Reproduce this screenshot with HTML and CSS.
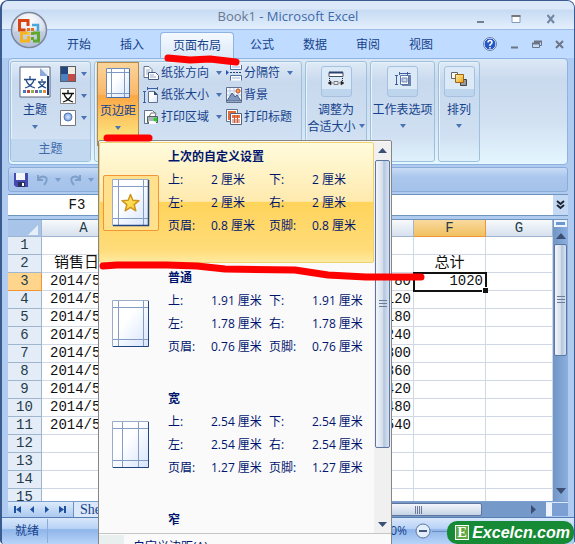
FILE: index.html
```html
<!DOCTYPE html>
<html lang="zh-CN">
<head>
<meta charset="utf-8">
<title>Book1 - Microsoft Excel</title>
<link rel="stylesheet" href="styles.css">
</head>
<body>
<svg class="defs" aria-hidden="true">
  <defs>
    <linearGradient id="page" x1="0" y1="0" x2="1" y2="1"><stop offset=".4" stop-color="#fff"/><stop offset="1" stop-color="#d6e4ff"/></linearGradient>
    <linearGradient id="gold" x1="0" y1="0" x2="1" y2="1"><stop offset="0" stop-color="#fff0a8"/><stop offset="1" stop-color="#eda51c"/></linearGradient>
    <linearGradient id="star" x1="0" y1="0" x2="1" y2="1"><stop offset="0" stop-color="#fff27a"/><stop offset="1" stop-color="#f9c62c"/></linearGradient>
    <radialGradient id="orb" cx=".5" cy=".25" r=".8"><stop offset="0" stop-color="#fff"/><stop offset=".5" stop-color="#dfe4ee"/><stop offset="1" stop-color="#9eb0cf"/></radialGradient>
    <radialGradient id="ball"><stop offset="0" stop-color="#dbe9ff"/><stop offset="1" stop-color="#7da0dc"/></radialGradient>
    <symbol id="arrow" viewBox="0 0 6 4"><path d="M0 0h6L3 4z" fill="#4a74b4"/></symbol>
  </defs>
</svg>
<div class="window">
  <header class="titlebar">
    <h1><span>Book1</span> - Microsoft Excel</h1>
    <div class="controls">
      <button aria-label="最小化"><svg width="10" height="10" viewBox="0 0 10 10"><path d="M1 8h7" stroke="#777f8c" stroke-width="2"/></svg></button>
      <button aria-label="最大化"><svg width="10" height="10" viewBox="0 0 10 10"><path d="M1 1.500h8v7H1z" fill="#fff" stroke="#7f9cc6"/><path d="M.5 2h9" stroke="#777" stroke-width="2"/></svg></button>
      <button aria-label="关闭"><svg width="10" height="10" viewBox="0 0 10 10"><path d="M1.500 1l6.500 8M8 1L1.500 9" stroke="#7387a5" stroke-width="2"/></svg></button>
    </div>
  </header>
  <button class="office" aria-label="Office 按钮">
    <svg width="38" height="38" viewBox="0 0 38 38">
      <circle cx="19" cy="19" r="17.500" fill="url(#orb)" stroke="#7d879b" stroke-width="1.500"/>
      <path d="M4 21q15-6 30 0a15 15 0 0 1-30 0z" fill="#b9c3d8" opacity=".6"/>
      <g fill="none" stroke-width="3"><path d="M18 15V9.500h-8.500v9.500h6" stroke="#d8430f"/><path d="M18 22h-6.500v8h7v-5" stroke="#f4b41c"/><path d="M23 30h5.500v-8H23" stroke="#5fa829"/><path d="M22 14h6v6" stroke="#48a8dc" stroke-width="2.500"/></g>
      <path d="M17 17h3v3h-3zM21 17h3v3h-3z" fill="#e5731b"/><path d="M17 21h3v3h-3z" fill="#f4c53c"/><path d="M21 21h3v3h-3zM21 26h3v3h-3z" fill="#6aa52e"/>
    </svg>
  </button>
  <nav class="tabs">
    <button>开始</button><button>插入</button><button class="active">页面布局</button><button>公式</button><button>数据</button><button>审阅</button><button>视图</button>
    <div class="doc-controls">
      <button aria-label="帮助"><svg width="14" height="14" viewBox="0 0 14 14"><circle cx="7" cy="7" r="6" fill="#2458c8" stroke="#fff"/><circle cx="7" cy="7" r="6.500" fill="none" stroke="#6a7da8"/><path d="M5 5.500Q5 3.500 7 3.500t2 2Q9 6.500 7 7.800V9M7 10v1.500" fill="none" stroke="#fff" stroke-width="1.500"/></svg></button>
      <button aria-label="最小化工作簿"><svg width="9" height="9" viewBox="0 0 9 9"><path d="M1 7.500h7" stroke="#6d7584" stroke-width="2"/></svg></button>
      <button aria-label="还原工作簿"><svg width="10" height="9" viewBox="0 0 10 9"><path d="M2.500 3V1.500h7v4H8M.5 3.500h7v4h-7z" fill="none" stroke="#6d7584"/><path d="M0 3.500h8M2 1.500h8" stroke="#6d7584" stroke-width="2"/></svg></button>
      <button aria-label="关闭工作簿"><svg width="9" height="9" viewBox="0 0 9 9"><path d="M1 1l7 7M8 1L1 8" stroke="#6d7584" stroke-width="2"/></svg></button>
    </div>
  </nav>
  <section class="ribbon">
    <div class="group theme">
      <div class="body">
        <button class="big">
          <svg width="32" height="32" viewBox="0 0 32 32"><path d="M1 1h30v30H1z" fill="#fff" stroke="#59657c"/><path d="M22 3h7v7z" fill="#e7effa"/><path d="M21 2v8h8z" fill="#8ea9d8"/><path d="M29 10v19" stroke="#183a73" stroke-width="2"/><g fill="none" stroke="#254d87" stroke-width="1.300"><path d="M11 10v3M5 13.500h12M7 14q2 6 9 8M15 14q-2 6-9 8"/><path d="M23 13v2M19 16h8M20 16q2 4 7 6M26 16q-2 4-7 6"/></g><path d="M4 24h3v3H4z" fill="#4678bd"/><path d="M8 24h3v3H8z" fill="#c0453f"/><path d="M12 24h3v3h-3z" fill="#92b14b"/><path d="M16 24h3v3h-3z" fill="#7a5a9e"/><path d="M20 24h3v3h-3z" fill="#3ea7c3"/><path d="M24 24h3v3h-3z" fill="#f08b35"/></svg>
          <span>主题</span><svg class="arrow"><use href="#arrow"/></svg>
        </button>
        <div class="stack">
          <button aria-label="颜色"><svg width="16" height="16" viewBox="0 0 16 16"><path d="M0 0h16v16H0z" fill="#5b6067"/><path d="M1 1h7v7H1z" fill="#21477e"/><path d="M8 1h7v7H8z" fill="#f0ede0"/><path d="M1 8h7v7H1z" fill="#4b80c3"/><path d="M8 8h7v7H8z" fill="#c34b45"/></svg><svg class="arrow"><use href="#arrow"/></svg></button>
          <button aria-label="字体"><svg width="16" height="16" viewBox="0 0 16 16"><path d="M.5.5h15v15H.5z" fill="#fff" stroke="#888"/><path d="M8 2v3M2 5.500h12M4 6q2 6 9 8M12 6q-2 6-9 8" fill="none" stroke="#111" stroke-width="1.300"/></svg><svg class="arrow"><use href="#arrow"/></svg></button>
          <button aria-label="效果"><svg width="16" height="16" viewBox="0 0 16 16"><path d="M.5.5h15v15H.5z" fill="#fff" stroke="#777"/><circle cx="8" cy="7" r="4" fill="url(#ball)" stroke="#527ac0"/></svg><svg class="arrow"><use href="#arrow"/></svg></button>
        </div>
      </div>
      <h2>主题</h2>
    </div>
    <div class="group setup">
      <div class="body">
        <button class="big margins" aria-expanded="true">
          <svg width="24" height="32" viewBox="0 0 24 32"><path d="M.5 1.500h23v29H.5z" fill="url(#page)" stroke="#6e8bb8"/><path d="M5.500 1v29M18.500 1v29M0 5.500h23M0 26.500h23" stroke="#7d99c2"/><path d="M23.500 2v28.500H1" fill="none" stroke="#466ba5"/></svg>
          <span>页边距</span><svg class="arrow"><use href="#arrow"/></svg>
        </button>
        <div class="stack">
          <button><svg width="16" height="16" viewBox="0 0 16 16"><path d="M1 1.500h5l3 3v8H1z" fill="#fff" stroke="#63728e"/><path d="M3 5h4M3 7h4M3 9h3" stroke="#93a9cf"/><path d="M5.500 7.500h7l3 3v4h-10z" fill="#fff" stroke="#485a7e"/><path d="M7 10h4M7 12h6" stroke="#93a9cf"/></svg><span>纸张方向</span><svg class="arrow"><use href="#arrow"/></svg></button>
          <button><svg width="16" height="16" viewBox="0 0 16 16"><path d="M5 1.500h9M4.500 0v3M14.500 0v3M1.500 5v10M0 4.500h3M0 15.500h3" stroke="#3d5f9f"/><path d="M5.500 4.500h6l3 3v8h-9z" fill="url(#page)" stroke="#63728e"/><path d="M11 4v4h4z" fill="#344d7c"/></svg><span>纸张大小</span><svg class="arrow"><use href="#arrow"/></svg></button>
          <button><svg width="16" height="16" viewBox="0 0 16 16"><path d="M1.500 1.500h8l3 3v10h-11z" fill="url(#page)" stroke="#63728e"/><path d="M6 8l2-4h5l-1 4z" fill="#fff" stroke="#777"/><path d="M4.500 7.500h10v6h-10z" fill="#a9b4b9" stroke="#545e66"/><path d="M6 12h7v3H6z" fill="#fff"/><circle cx="12.500" cy="10.500" r="2" fill="#29ce29"/></svg><span>打印区域</span><svg class="arrow"><use href="#arrow"/></svg></button>
        </div>
        <div class="stack">
          <button><svg width="16" height="16" viewBox="0 0 16 16"><path d="M4.500 0v4.500h11V0M4.500 15.500v-5h11v5" fill="#fff" stroke="#52709f"/><path d="M6 2h8M6 13h8" stroke="#9cb3da"/><path d="M4 7.500h12" stroke="#29436f" stroke-dasharray="2 1"/><path d="M0 5l3 2.500L0 10z" fill="#2554b3"/></svg><span>分隔符</span><svg class="arrow"><use href="#arrow"/></svg></button>
          <button><svg width="16" height="16" viewBox="0 0 16 16"><path d="M.5.5h15v15H.5z" fill="#f6f9ff" stroke="#63728e"/><path d="M4 1v14M8 1v14M12 1v14M1 4h14M1 8h14" stroke="#bccbe4"/><path d="M1 14l5-8 3 4 2-2 4 6z" fill="#8299bf" stroke="#4b618a"/><circle cx="12" cy="4" r="2" fill="#f7a04b" stroke="#c4502c"/></svg><span>背景</span></button>
          <button><svg width="16" height="16" viewBox="0 0 16 16"><path d="M.5.5h11v12H.5z" fill="#fff" stroke="#63728e"/><path d="M2 3h8M3 2v9" stroke="#e16b37" stroke-width="2"/><path d="M4.500 4.500h11v11h-11z" fill="#fff" stroke="#505f7b"/><path d="M6 6h8v3H6z" fill="#ef713f"/><path d="M6 11h8M6 13h8M8.500 6v8M11.500 6v8" stroke="#c75d3c"/></svg><span>打印标题</span></button>
        </div>
      </div>
    </div>
    <div class="group collapsed scale"><button class="big"><span class="tile"><svg width="16" height="16" viewBox="0 0 16 16"><path d="M1 1.500h14v4H1z" fill="#fff" stroke="#44526e"/><path d="M1 1.500h14" stroke="#29436f" stroke-width="2"/><path d="M1.500 7v4M14.500 7v4" stroke="#222" stroke-dasharray="1 1"/><path d="M6 10.500h4v3H6z" fill="#eee" stroke="#777"/><path d="M0 12l3-2v4zM16 12l-3-2v4zM3 12h2M11 12h2" fill="#222" stroke="#222" stroke-width=".5"/></svg></span><span>调整为</span><span>合适大小 <svg class="arrow"><use href="#arrow"/></svg></span></button></div>
    <div class="group collapsed options"><button class="big"><span class="tile"><svg width="16" height="16" viewBox="0 0 16 16"><path d="M4.500 2.500h11M4.500 1v3M12.500 1v3M1.500 4v9M0 4.500h3M0 13.500h3" stroke="#3d5f9f"/><path d="M7 4h9v11H7z" fill="#6d83ab"/><path d="M5.500 4.500h8v9h-8z" fill="#fff" stroke="#5975a8"/><path d="M7 7h5v4H7z" fill="#c8d3e8" stroke="#7389b0"/></svg></span><span>工作表选项</span><svg class="arrow"><use href="#arrow"/></svg></button></div>
    <div class="group collapsed arrange"><button class="big"><span class="tile"><svg width="16" height="16" viewBox="0 0 16 16"><path d="M.5 1.500h6v6h-6z" fill="#f9fafc" stroke="#666"/><path d="M9.500 8.500h6v6h-6z" fill="#999" stroke="#444"/><path d="M4.500 3.500h8v8h-8z" fill="url(#gold)" stroke="#9e6413"/></svg></span><span>排列</span><svg class="arrow"><use href="#arrow"/></svg></button></div>
  </section>
  <div class="quick">
    <button aria-label="保存"><svg width="14" height="14" viewBox="0 0 14 14"><path d="M0 0h14v14H2l-2-2z" fill="#4649b0"/><path d="M2 0h9v7H2z" fill="#f3f6fd"/><path d="M4 9h7v5H4z" fill="#27305a"/><path d="M8 10h2v3H8z" fill="#fff"/></svg></button>
    <button aria-label="撤消"><svg width="13" height="13" viewBox="0 0 13 13"><path d="M2 2v5h5M2 7q3-5 7-3t-1 8" fill="none" stroke="#7f9fcb" stroke-width="2"/></svg></button>
    <svg class="arrow pale"><use href="#arrow"/></svg>
    <button aria-label="恢复"><svg width="13" height="13" viewBox="0 0 13 13"><path d="M11 2v5H6M11 7Q8 2 4 4t1 8" fill="none" stroke="#7f9fcb" stroke-width="2"/></svg></button>
    <svg class="arrow pale"><use href="#arrow"/></svg>
  </div>
  <div class="formula">
    <input class="name" aria-label="名称框" value="F3"><input class="entry" aria-label="编辑栏">
    <button aria-label="展开编辑栏"><svg width="9" height="10" viewBox="0 0 9 10"><path d="M1 1l3.500 3L8 1M1 5l3.500 3L8 5" fill="none" stroke="#1b2430" stroke-width="2"/></svg></button>
  </div>
  <main class="work">
    <div class="grid">
      <table>
        <colgroup><col class="c-head"><col class="c-a"><col class="c"><col class="c"><col class="c"><col class="c"><col class="c"><col></colgroup>
        <thead><tr><th class="corner"><svg width="10" height="10" viewBox="0 0 10 10"><path d="M10 0v10H0z" fill="#e6eefa"/></svg></th><th>A</th><th>B</th><th>C</th><th>D</th><th>E</th><th class="on">F</th><th>G</th></tr></thead>
        <tbody>
          <tr><th>1</th><td></td><td></td><td></td><td></td><td></td><td></td><td></td></tr>
          <tr class="names"><th>2</th><td>销售日期</td><td></td><td></td><td></td><td></td><td>总计</td><td></td></tr>
          <tr><th class="on">3</th><td>2014/5/1</td><td></td><td></td><td></td><td>80</td><td class="selected">1020</td><td></td></tr>
          <tr><th>4</th><td>2014/5/2</td><td></td><td></td><td></td><td>120</td><td></td><td></td></tr>
          <tr><th>5</th><td>2014/5/3</td><td></td><td></td><td></td><td>180</td><td></td><td></td></tr>
          <tr><th>6</th><td>2014/5/4</td><td></td><td></td><td></td><td>240</td><td></td><td></td></tr>
          <tr><th>7</th><td>2014/5/5</td><td></td><td></td><td></td><td>300</td><td></td><td></td></tr>
          <tr><th>8</th><td>2014/5/6</td><td></td><td></td><td></td><td>360</td><td></td><td></td></tr>
          <tr><th>9</th><td>2014/5/7</td><td></td><td></td><td></td><td>420</td><td></td><td></td></tr>
          <tr><th>10</th><td>2014/5/8</td><td></td><td></td><td></td><td>480</td><td></td><td></td></tr>
          <tr><th>11</th><td>2014/5/9</td><td></td><td></td><td></td><td>540</td><td></td><td></td></tr>
          <tr><th>12</th><td></td><td></td><td></td><td></td><td></td><td></td><td></td></tr>
          <tr><th>13</th><td></td><td></td><td></td><td></td><td></td><td></td><td></td></tr>
          <tr><th>14</th><td></td><td></td><td></td><td></td><td></td><td></td><td></td></tr>
          <tr><th>15</th><td></td><td></td><td></td><td></td><td></td><td></td><td></td></tr>
        </tbody>
      </table>
    </div>
    <div class="vscroll">
      <div class="split"></div>
      <svg width="10" height="6" viewBox="0 0 10 6"><path d="M5 0l5 6H0z" fill="#3b4e73"/></svg>
      <div class="thumb"><i></i></div>
      <svg class="down" width="10" height="6" viewBox="0 0 10 6"><path d="M0 0h10L5 6z" fill="#3b4e73"/></svg>
    </div>
  </main>
  <div class="sheets">
    <button aria-label="第一张"><svg width="7" height="7" viewBox="0 0 7 7"><path d="M0 0h2v7H0zM7 0v7L2 3.500z" fill="#1d50a0"/></svg></button>
    <button aria-label="上一张"><svg width="7" height="7" viewBox="0 0 7 7"><path d="M5 0v7L1 3.500z" fill="#1d50a0"/></svg></button>
    <button aria-label="下一张"><svg width="7" height="7" viewBox="0 0 7 7"><path d="M1 0v7l4-3.500z" fill="#1d50a0"/></svg></button>
    <button aria-label="最后一张"><svg width="7" height="7" viewBox="0 0 7 7"><path d="M5 0h2v7H5zM0 0v7l5-3.500z" fill="#1d50a0"/></svg></button>
    <button class="sheet-tab">Sheet1</button>
    <div class="hscroll"><div class="thumb"><i></i></div><svg width="5" height="9" viewBox="0 0 5 9"><path d="M0 0v9l5-4.500z" fill="#3b4e73"/></svg></div>
    <div class="hsplit"></div>
  </div>
  <footer class="status">
    <span class="ready">就绪</span>
    <span class="zoom">100%</span>
    <button aria-label="缩小"><svg width="16" height="16" viewBox="0 0 16 16"><circle cx="8" cy="8" r="7" fill="#e3eefc" stroke="#5c769f"/><path d="M4 8h8" stroke="#44577a" stroke-width="2"/></svg></button>
    <input type="range" aria-label="显示比例" value="50">
  </footer>
  <div class="menu">
    <div class="viewport">
      <div class="list">
        <button class="item last">
          <span class="thumbnail"><svg width="38" height="48" viewBox="0 0 38 48"><path d="M.5.5h36v46H.5z" fill="url(#page)" stroke="#9aadc8"/><path d="M6.500 1v45M31.500 1v45M1 7.500h35M1 39.500h35" stroke="#859dc0"/><path d="M36.500 1v45.500H1" fill="none" stroke="#23457f" stroke-width="1.500"/><path d="M18.500 15.500l2.300 5.800 6.200.4-4.800 4 1.600 6.100-5.300-3.400-5.300 3.400 1.600-6.100-4.800-4 6.200-.4z" fill="url(#star)" stroke="#cf951c" stroke-width="1.500" stroke-linejoin="round"/></svg></span>
          <span class="values"><b>上次的自定义设置</b><span>上:</span><span>2 厘米</span><span>下:</span><span>2 厘米</span><span>左:</span><span>2 厘米</span><span>右:</span><span>2 厘米</span><span>页眉:</span><span>0.8 厘米</span><span>页脚:</span><span>0.8 厘米</span></span>
        </button>
        <button class="item">
          <span class="thumbnail"><svg width="38" height="48" viewBox="0 0 38 48"><path d="M.5.5h36v46H.5z" fill="url(#page)" stroke="#9aadc8"/><path d="M6.500 1v45M31.500 1v45M1 7.500h35M1 39.500h35" stroke="#859dc0"/><path d="M36.500 1v45.500H1" fill="none" stroke="#23457f"/></svg></span>
          <span class="values"><b>普通</b><span>上:</span><span>1.91 厘米</span><span>下:</span><span>1.91 厘米</span><span>左:</span><span>1.78 厘米</span><span>右:</span><span>1.78 厘米</span><span>页眉:</span><span>0.76 厘米</span><span>页脚:</span><span>0.76 厘米</span></span>
        </button>
        <button class="item">
          <span class="thumbnail"><svg width="38" height="48" viewBox="0 0 38 48"><path d="M.5.5h36v46H.5z" fill="url(#page)" stroke="#9aadc8"/><path d="M10.500 1v45M26.500 1v45M1 7.500h35M1 39.500h35" stroke="#859dc0"/><path d="M36.500 1v45.500H1" fill="none" stroke="#23457f"/></svg></span>
          <span class="values"><b>宽</b><span>上:</span><span>2.54 厘米</span><span>下:</span><span>2.54 厘米</span><span>左:</span><span>2.54 厘米</span><span>右:</span><span>2.54 厘米</span><span>页眉:</span><span>1.27 厘米</span><span>页脚:</span><span>1.27 厘米</span></span>
        </button>
        <button class="item"><span class="thumbnail"></span><span class="values"><b>窄</b></span></button>
      </div>
      <div class="menu-scroll">
        <svg width="9" height="5" viewBox="0 0 9 5"><path d="M4.500 0L9 5H0z" fill="#3b4e73"/></svg>
        <div class="thumb"><i></i></div>
        <svg class="down" width="9" height="5" viewBox="0 0 9 5"><path d="M0 0h9L4.500 5z" fill="#3b4e73"/></svg>
      </div>
    </div>
    <button class="custom">自定义边距(A)...</button>
  </div>
  <div class="brand"><span>E</span>Excelcn.com</div>
  <svg class="marks" width="430" height="290" viewBox="0 0 430 290" aria-hidden="true"><g fill="none" stroke="#f00" stroke-width="7" stroke-linecap="round" stroke-linejoin="round"><path d="M168 58l22 2 20-1 26 3"/><path d="M107 138h42"/><path d="M103 266l14-1h50l30 1 28 3 70 1 33 5 38 2h55"/></g></svg>
</div>
</body>
</html>
```
FILE: styles.css
```css
* { box-sizing: border-box; }
body { margin: 0; font: 12px/16px "Open Sans", "Noto Sans CJK SC", sans-serif; color: #15428b; background: #fff; }
button, input { font: inherit; color: inherit; margin: 0; padding: 0; border: 0; background: none; }
svg { display: block; flex: none; }
h1, h2 { margin: 0; font-size: 12px; font-weight: 400; }
.defs { position: absolute; width: 0; height: 0; }
.window { position: relative; display: flex; flex-direction: column; height: 100vh; overflow: hidden; border: solid #3b5a90; border-width: 1px 1px 0 2px; border-radius: 8px 8px 4px 4px; background: #b0cbf0; }
.arrow { width: 6px; height: 4px; }

.titlebar { position: relative; flex: none; height: 29px; border-bottom: 1px solid #9bbce8; background: linear-gradient(#dae8fa 0 8px, #c7dbf3 9px, #e3effd); }
.titlebar h1 { padding-top: 7px; text-align: center; font-size: 13px; color: #3e6aaa; }
.titlebar h1 span { color: #697890; }
.controls { position: absolute; right: 18px; top: 13px; display: flex; gap: 25px; }

.office { position: absolute; left: 8px; top: 10px; z-index: 2; }

.tabs { flex: none; display: flex; align-items: flex-end; gap: 3px; height: 28px; padding: 0 10px 0 52px; background: #bfdbff; }
.tabs > button { width: 50px; height: 26px; }
.tabs .active { width: 74px; border: 1px solid #8db2e3; border-bottom: 0; border-radius: 4px 4px 0 0; background: linear-gradient(#f4f9ff, #dce9f8); }
.doc-controls { display: flex; align-items: center; gap: 13px; height: 28px; margin-left: auto; }

.ribbon { flex: none; display: flex; gap: 3px; height: 107px; margin: 0 6px; padding: 2px 1px; border: 1px solid #8db2e3; border-radius: 4px; background: linear-gradient(#dce8f5, #c9daee 20%, #d2e1f2 60%, #e4f6ff); }
.group { display: flex; flex-direction: column; overflow: hidden; border: 1px solid #9dc1dc; border-radius: 3px; box-shadow: inset 1px 1px 0 #e8f2fb; background: linear-gradient(#dfeaf6, #c8d9ee 20%, #d0e0f2 75%, #dff1fc); }
.group h2 { height: 22px; line-height: 20px; text-align: center; color: #3e6aaa; background: #c2d8f1; }
.body { flex: 1; display: flex; min-height: 0; }
.theme { width: 81px; }
.setup { width: 208px; }
.scale { width: 62px; }
.options { width: 65px; }
.arrange { width: 42px; }
.big { display: flex; flex-direction: column; align-items: center; gap: 3px; padding-top: 4px; line-height: 17px; white-space: nowrap; }
.big .arrow { margin-top: 4px; }
.big span .arrow { display: inline-block; margin: 0 0 3px; }
.theme .big { width: 48px; }
.theme .stack { padding-left: 1px; }
.margins { width: 42px; height: 84px; margin-left: 2px; border: 1px solid #b38a45; background: linear-gradient(#fbd49b, #fbb867 38%, #fba745 40%, #fddd77 85%); }
.stack { flex: none; display: flex; flex-direction: column; }
.stack button { display: flex; align-items: center; gap: 2px; height: 22px; white-space: nowrap; }
.theme .stack button { gap: 5px; padding-top: 2px; }
.setup .stack { padding-left: 4px; }
.setup .stack .arrow { margin-left: 5px; }
.collapsed .big { width: 100%; gap: 0; padding-top: 4px; }
.collapsed .arrow { margin-top: 6px; }
.tile { display: flex; justify-content: center; width: 31px; height: 31px; margin-bottom: 4px; padding-top: 4px; border: 1px solid #a6c0e0; border-radius: 3px; background: linear-gradient(#dce9f7 75%, #bed5ee 75%); }

.quick { flex: none; display: flex; align-items: center; gap: 6px; height: 25px; margin: 2px 6px 0; padding: 0 5px; border: 1px solid #8bacd9; border-radius: 3px; background: linear-gradient(#c8dcf5, #aac6ec 40%, #a5c2ea); }
.quick button:nth-of-type(n+2) { margin-left: 2px; }
.pale { opacity: .5; }

.formula { flex: none; display: flex; height: 22px; margin: 2px 6px 3px; border: solid #6f94bd; border-width: 1px 0; background: #fff; }
.formula .name { width: 138px; text-align: center; font: 14px "Liberation Mono", monospace; color: #111; }
.formula .entry { flex: 1; min-width: 0; }
.formula button { display: grid; place-items: center; width: 15px; background: #c4d9f4; }

.work { flex: 1; min-height: 0; display: flex; margin: 0 6px; border-top: 1px solid #6f94bd; overflow: hidden; }
.grid { flex: 1; min-width: 0; overflow: hidden; background: #fff; }
table { width: 100%; table-layout: fixed; border-spacing: 0; font: 14px/17px "Liberation Mono", "Noto Sans CJK SC", monospace; color: #111; }
.c-head { width: 34px; }
.c-a { width: 84px; }
.c { width: 72px; }
th, td { height: 18px; padding: 0 2px; border: solid #d0d7e5; border-width: 0 1px 1px 0; line-height: 17px; text-align: right; white-space: nowrap; overflow: hidden; }
th { font-weight: 400; text-align: center; color: #243c4a; border-color: #9eb6ce; background: #e4ecf7; }
thead th { height: 17px; line-height: 16px; background: linear-gradient(#f8fafc, #d6e0ed); }
thead .corner { background: #a9c4e9; }
.corner svg { margin: 3px 0 0 18px; }
.on { background: #ffd58d; border-color: #f29536; }
thead .on { background: linear-gradient(#f9d99f, #f1c15f); }
.names td { text-align: center; font-size: 15px; line-height: 16px; }
tbody td:nth-child(2) { text-align: left; padding-left: 8px; }
.names td:nth-child(2) { padding-left: 12px; }
.selected { position: relative; overflow: visible; outline: 2px solid #111; outline-offset: -1px; }
.selected::after { content: ""; position: absolute; right: -3px; bottom: -3px; width: 5px; height: 5px; border: solid #fff; border-width: 1px 0 0 1px; background: #111; }

.vscroll { flex: none; display: flex; flex-direction: column; align-items: center; width: 15px; background: linear-gradient(90deg, #7096c5, #8cafe0); }
.split { width: 13px; height: 7px; margin-bottom: 6px; border: 2px solid #eef4fd; background: #6d98cf; }
.thumb { display: grid; place-items: center; border: 1px solid #5e769e; border-radius: 2px; background: linear-gradient(90deg, #f3f6fb, #d5dfec 50%, #b4c6dc 60%, #d8e3f2); }
.thumb i { width: 8px; height: 8px; background: repeating-linear-gradient(#6c7c98 0 1px, transparent 1px 3px); }
.vscroll .thumb { width: 13px; height: 112px; margin-top: 5px; }
.vscroll .down { margin: auto 0 7px; }

.sheets { flex: none; display: flex; align-items: center; height: 16px; margin: 0 6px; padding-left: 5px; border-top: 1px solid #7ba0cf; background: linear-gradient(#dceafb, #acc9f0); }
.sheets > button { width: 15px; height: 7px; padding-left: 1px; }
.sheets .sheet-tab { width: 64px; height: 15px; padding-left: 6px; text-align: left; border-left: 1px solid #6d90c2; font: 14px/15px "Liberation Serif", serif; background: #dbe8f9; }
.hscroll { flex: 1; display: flex; align-items: center; justify-content: space-between; height: 15px; margin-left: 60px; padding-right: 10px; background: #7599c8; }
.hscroll .thumb { width: 84%; height: 13px; background: linear-gradient(#f3f6fb, #c5d3e5); }
.hscroll i { margin-left: 56%; background: repeating-linear-gradient(90deg, #6c7c98 0 1px, transparent 1px 2px); }
.hsplit { width: 22px; height: 13px; border-left: 6px solid #eef4fd; background: #7ca0d3; }

.status { flex: none; display: flex; align-items: center; height: 27px; padding-left: 13px; border-top: 1px solid #567db1; background: linear-gradient(#d8e7fb, #b9d3f6 40%, #8fb5ea 45%, #b8d4f8); }
.ready { width: 33px; line-height: 24px; border-right: 1px solid #8aacd9; }
.zoom { margin-left: auto; margin-right: 8px; }
.status input { width: 118px; height: 16px; margin: 0 24px 0 1px; appearance: none; background: linear-gradient(#6e8db8, #6e8db8) center / 100% 1px no-repeat; }
.status input::-webkit-slider-thumb { appearance: none; width: 8px; height: 14px; border: 1px solid #5c769f; background: #e3eefc; }

.menu { position: absolute; left: 96px; top: 139px; z-index: 3; width: 294px; border: 1px solid #868686; border-radius: 2px; background: #fafafa; color: #00156e; }
.viewport { display: flex; height: 393px; padding-top: 1px; overflow: hidden; border-bottom: 1px solid #c5c5c5; }
.list { flex: 1; overflow: hidden; }
.item { display: flex; align-items: center; width: 100%; height: 121px; padding: 0 3px; text-align: left; border: 1px solid transparent; }
.last { border-color: #edd26f; border-radius: 2px; background: linear-gradient(#fffbdc, #ffeaae 49%, #ffd45c 50%, #ffdc7a 90%, #ffeaa0); }
.thumbnail { flex: none; display: grid; place-items: center; width: 56px; height: 56px; border: 1px solid transparent; border-radius: 2px; }
.last .thumbnail { border-color: #f29536; background: #ffe08c; }
.values { align-self: flex-start; display: grid; grid-template-columns: 43px 58px 43px auto; grid-auto-rows: 23px; padding: 2px 0 0 9px; line-height: 23px; white-space: nowrap; }
.values b { grid-column: 1 / -1; font-weight: 700; }
.menu-scroll { flex: none; display: flex; flex-direction: column; align-items: center; width: 17px; padding: 6px 0; background: #f0f0f0; }
.menu-scroll .thumb { width: 15px; height: 288px; margin-top: 7px; }
.menu-scroll .down { margin-top: auto; }
.custom { display: block; width: 100%; margin: 1px 0; padding-left: 9px; line-height: 24px; text-align: left; border-left: 25px solid #e9eeee; }

.brand { position: absolute; right: 0; bottom: 0; z-index: 4; display: flex; align-items: center; gap: 3px; height: 23px; padding: 0 4px 0 8px; border-radius: 10px; font: italic 700 16px/22px "Liberation Sans", sans-serif; color: #fff; background: #168a35; }
.brand span { width: 14px; height: 15px; border: 1px solid #fff; font: 700 14px/13px "Liberation Serif", serif; text-align: center; background: #62a844; }
.marks { position: absolute; left: -2px; top: -1px; z-index: 5; pointer-events: none; }
```
